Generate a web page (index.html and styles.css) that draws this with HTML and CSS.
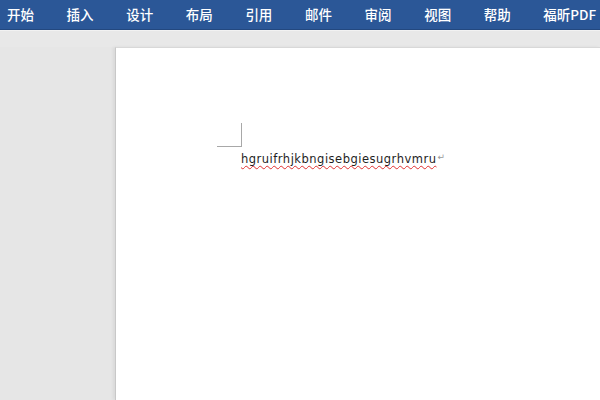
FILE: index.html
```html
<!DOCTYPE html>
<html lang="zh">
<head>
<meta charset="utf-8">
<link rel="stylesheet" href="styles.css">
</head>
<body>
<div class="tabs">
  <span class="tab">开始</span>
  <span class="tab">插入</span>
  <span class="tab">设计</span>
  <span class="tab">布局</span>
  <span class="tab">引用</span>
  <span class="tab">邮件</span>
  <span class="tab">审阅</span>
  <span class="tab">视图</span>
  <span class="tab">帮助</span>
  <span class="tab">福昕PDF</span>
</div>
<div class="strip"></div>
<div class="workspace">
  <div class="gutter"></div>
  <div class="page">
    <div class="corner"></div>
    <p class="line"><span class="word">hgruifrhjkbngisebgiesugrhvmru</span><span class="ret">↵</span></p>
  </div>
</div>
</body>
</html>
```
FILE: styles.css
```css
html, body {
  margin: 0;
  padding: 0;
  width: 600px;
  height: 400px;
  overflow: hidden;
  background: #e6e6e6;
}
.tabs {
  display: flex;
  height: 30px;
  background: #2b5797;
  border-bottom: 1px solid #23487f;
  box-sizing: border-box;
  padding-left: 7px;
  align-items: center;
  font-family: "Noto Sans CJK SC", "Liberation Sans", sans-serif;
  font-size: 13.5px;
  font-weight: 500;
  color: #ffffff;
  white-space: nowrap;
}
.tab {
  flex: 0 0 59.6px;
  line-height: 30px;
  padding-bottom: 1px;
}
.strip {
  height: 17px;
  background: #e8e8e8;
  border-top: 1px solid #f2f2f2;
  box-sizing: border-box;
}
.workspace {
  display: flex;
  height: 353px;
}
.gutter {
  flex: 0 0 115px;
  background: #e6e6e6;
}
.page {
  flex: 1;
  background: #ffffff;
  border-left: 1px solid #c8c8c8;
  border-top: 1px solid #d8d8d8;
  box-shadow: -2px 0 3px rgba(0,0,0,0.06);
  padding: 75px 0 0 101px;
}
.corner {
  width: 24px;
  height: 23px;
  border-right: 1px solid #a8a8a8;
  border-bottom: 1px solid #a8a8a8;
}
.line {
  margin: 3px 0 0 24px;
  font-family: "DejaVu Sans", sans-serif;
  font-size: 11.5px;
  letter-spacing: 0.5px;
  line-height: 14px;
  color: #1e1e1e;
}
.word {
  text-decoration: underline wavy #e03030;
  text-decoration-thickness: 1px;
  text-underline-offset: 2px;
}
.ret {
  font-size: 9px;
  color: #999;
  margin-left: 1px;
  vertical-align: 3px;
}
```
